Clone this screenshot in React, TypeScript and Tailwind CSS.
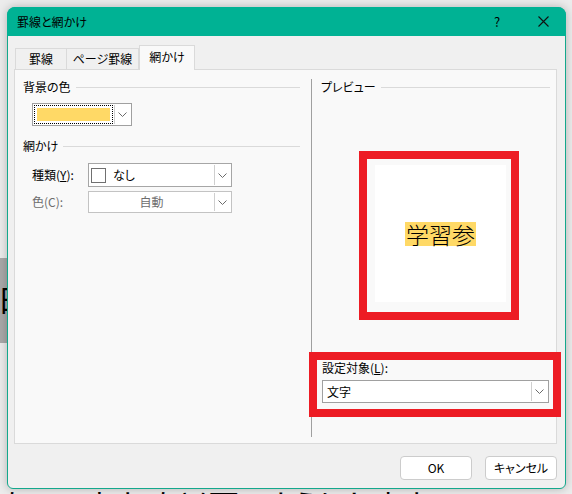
import React from "react";

const FONT =
  "font-['Noto_Sans_CJK_JP','Noto_Sans',sans-serif] [font-feature-settings:'palt']";

function Arrow() {
  return (
    <div className="flex items-center justify-center w-[16px] shrink-0 my-px mr-px bg-white border-l border-[#cfcfcf]">
      <svg width="9" height="5" viewBox="0 0 9 5">
        <path d="M0.5 0.5L4.5 4.5L8.5 0.5" fill="none" stroke="#6b6b6b" strokeWidth="1" />
      </svg>
    </div>
  );
}

function GroupHeader({ label, className = "" }: { label: string; className?: string }) {
  return (
    <div className={`flex items-center gap-[5px] h-[16px] ${className}`}>
      <span className="text-[12px] leading-[16px] text-black whitespace-nowrap">{label}</span>
      <div className="flex-1 h-px bg-[#dadada]" />
    </div>
  );
}

export default function App() {
  return (
    <div className={`relative w-[572px] h-[494px] overflow-hidden bg-[#ececec] ${FONT}`}>
      {/* document behind the dialog */}
      <div className="flex flex-col h-full">
        <div className="h-[258px]" />
        <div className="w-[20px] h-[85px] bg-[#a9a9a9] flex items-center text-[34px] leading-none text-black">
          暗
        </div>
        <div className="flex-1" />
        <div className="h-[10px] overflow-hidden">
          <div className="text-[30px] leading-[30px] mt-[4px] text-black whitespace-nowrap">
            をいいます。を以下のようにします。
          </div>
        </div>
      </div>

      {/* dialog window */}
      <div className="absolute left-[7px] top-[7px] w-[559px] h-[482px] flex flex-col rounded-t-[8px] rounded-b-[6px] border border-[#13a88c] bg-[#f0f0f0] shadow-[0_0_10px_rgba(0,0,0,0.25)]">
        {/* title bar */}
        <div className="flex items-center h-[29px] -mx-px -mt-px px-[10px] rounded-t-[8px] bg-[#00b294]">
          <span className="text-[12px] text-black">罫線と網かけ</span>
          <div className="flex-1" />
          <span className="w-[20px] text-center text-[13px] text-black mr-[31px]">?</span>
          <svg width="11" height="11" viewBox="0 0 11 11" className="mr-[7px]">
            <path d="M0.5 0.5L10.5 10.5M10.5 0.5L0.5 10.5" stroke="#111" strokeWidth="1.1" />
          </svg>
        </div>

        <div className="flex flex-col px-[6px] pt-[9px]">
          {/* tabs */}
          <div className="flex items-end h-[25px] -mb-px pl-px">
            <div className="flex items-center justify-center w-[52px] h-[22px] border border-[#dadada] bg-[#f0f0f0] text-[12px] text-black">
              罫線
            </div>
            <div className="flex items-center justify-center w-[72px] h-[22px] border border-l-0 border-[#dadada] bg-[#f0f0f0] text-[12px] text-black">
              ページ罫線
            </div>
            <div className="relative z-10 flex items-center justify-center w-[56px] h-[25px] pb-[2px] border border-b-0 border-[#dadada] bg-[#f9f9f9] text-[12px] text-black">
              網かけ
            </div>
          </div>

          {/* panel */}
          <div className="relative flex w-[543px] h-[375px] border border-[#dadada] bg-[#f9f9f9]">
            {/* left column */}
            <div className="flex flex-col w-[296px] pl-[8px] pr-[11px]">
              <GroupHeader label="背景の色" className="mt-[9px]" />
              <div className="flex h-[23px] w-[100px] mt-[8px] ml-[9px] border border-[#a0a0a0] bg-white">
                <div className="flex-1 m-px p-[2px] border border-dotted border-black">
                  <div className="w-full h-full bg-[#ffd966]" />
                </div>
                <Arrow />
              </div>

              <GroupHeader label="網かけ" className="mt-[12px]" />
              <div className="flex items-center mt-[9px] ml-[9px]">
                <span className="w-[56px] text-[12px] text-black">
                  種類(<span className="underline">Y</span>):
                </span>
                <div className="flex h-[24px] w-[144px] border border-[#a6a6a6] bg-white">
                  <div className="flex-1 flex items-center pl-[2px]">
                    <div className="w-[15px] h-[15px] border border-[#707070] bg-white" />
                    <span className="ml-[7px] text-[12px] text-black">なし</span>
                  </div>
                  <Arrow />
                </div>
              </div>
              <div className="flex items-center mt-[4px] ml-[9px]">
                <span className="w-[56px] text-[12px] text-[#6d6d6d]">色(C):</span>
                <div className="flex h-[22px] w-[144px] border border-[#c3c3c3] bg-white">
                  <div className="flex-1 flex items-center justify-center text-[12px] text-[#6d6d6d]">
                    自動
                  </div>
                  <Arrow />
                </div>
              </div>
            </div>

            {/* separator */}
            <div className="w-px mt-[9px] mb-[6px] bg-[#a0a0a0]" />

            {/* right column */}
            <div className="flex flex-col flex-1 pl-[9px] pr-[6px]">
              <GroupHeader label="プレビュー" className="mt-[9px]" />
              <div className="flex items-center justify-center w-[131px] h-[137px] mt-[70px] ml-[54px] bg-white">
                <span className="px-[1px] bg-[#ffd966] text-[23px] leading-[24px] font-[300] text-black">
                  学習参
                </span>
              </div>
              <div className="mt-[58px] ml-[1px] text-[12px] leading-[16px] text-black">
                設定対象(<span className="underline">L</span>):
              </div>
              <div className="flex h-[23px] w-[227px] mt-[4px] ml-[1px] border border-[#a0a0a0] bg-white">
                <div className="flex-1 flex items-center pl-[4px] text-[12px] text-black">文字</div>
                <Arrow />
              </div>
            </div>

            {/* red highlight annotations */}
            <div className="absolute left-[344px] top-[81px] w-[160px] h-[169px] border-[8px] border-[#ed1c24] pointer-events-none" />
            <div className="absolute left-[294px] top-[282px] w-[252px] h-[65px] border-[8px] border-[#ed1c24] pointer-events-none" />
          </div>
        </div>

        {/* buttons */}
        <div className="flex justify-end gap-[13px] mt-[12px] pr-[8px]">
          <button className="w-[72px] h-[24px] rounded-[4px] border border-[#cccccc] bg-white text-[12px] text-black">
            OK
          </button>
          <button className="w-[72px] h-[24px] rounded-[4px] border border-[#cccccc] bg-white text-[12px] text-black">
            キャンセル
          </button>
        </div>
      </div>
    </div>
  );
}
